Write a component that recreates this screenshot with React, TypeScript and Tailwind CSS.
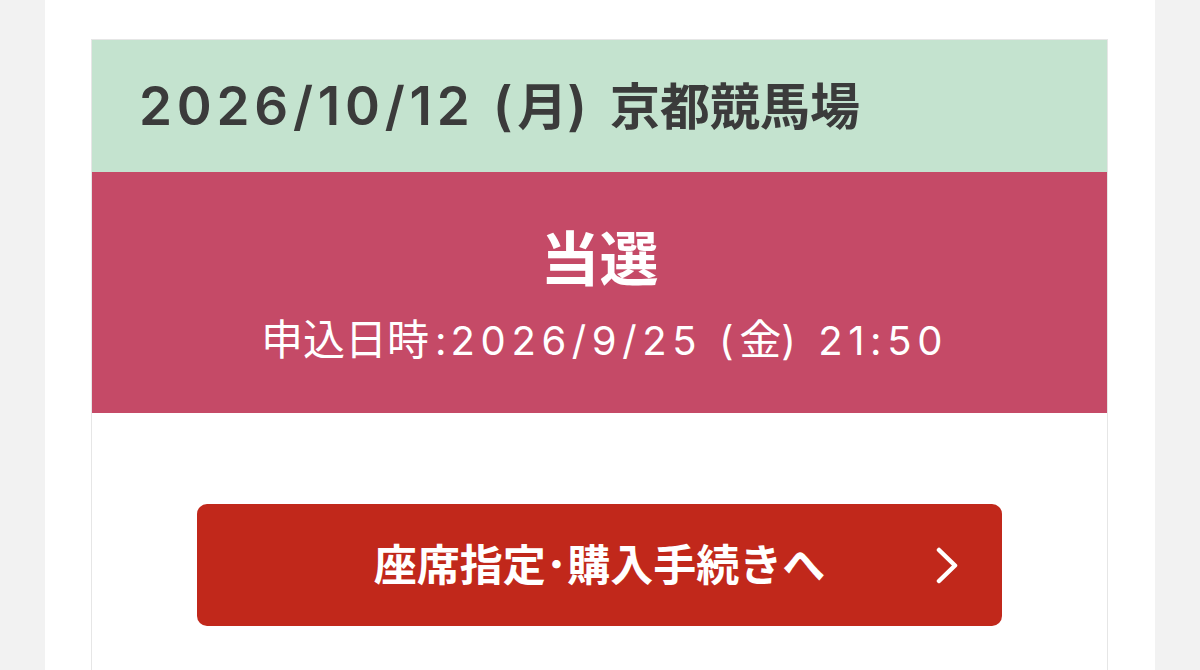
const jp = { fontFamily: 'Inter, "Noto Sans CJK JP", sans-serif' };

function Chevron() {
  return (
    <svg
      className="absolute right-[44px] h-[37px] w-[22px]"
      viewBox="0 0 22 37"
      fill="none"
      stroke="currentColor"
      strokeWidth={4.5}
      strokeLinecap="round"
      strokeLinejoin="round"
    >
      <polyline points="3,3 19,18.5 3,34" />
    </svg>
  );
}

function ResultCard() {
  return (
    <div className="ml-[46px] mt-[39px] w-[1017px] border border-[#e6e6e6] bg-white" style={jp}>
      {/* race date + venue */}
      <div className="flex h-[132px] items-center bg-[#c4e3cf] pl-[47px]">
        <h2 className="text-[50px] font-semibold leading-none text-[#3b3b3b]">
          <span className="text-[53px] tracking-[0.09em]">2026/10/12 (</span>月
          <span className="text-[53px] tracking-[0.09em]">) </span>
          京都競馬場
        </h2>
      </div>

      {/* lottery result */}
      <div className="flex h-[241px] flex-col items-center bg-[#c54a67] pt-[58px] text-white">
        <p className="text-[59px] font-bold leading-none">当選</p>
        <p className="mt-[30px] pl-[10px] text-[42px] font-normal leading-none">
          申込日時<span className="ml-[6px] mr-[4px] text-[40px]">:</span>
          <span className="text-[40px] tracking-[0.14em]">2026/9/25 (</span>金
          <span className="text-[40px] tracking-[0.14em]">) 21:50</span>
        </p>
      </div>

      <div className="px-[105px] pt-[91px] pb-[60px]">
        <button className="relative flex h-[122px] w-full items-center justify-center rounded-[10px] bg-[#c1281b] text-white">
          <span className="text-[43px] font-bold leading-none">座席指定･購入手続きへ</span>
          <Chevron />
        </button>
      </div>
    </div>
  );
}

export default function App() {
  return (
    <div className="flex min-h-[670px] justify-center bg-[#f2f2f2]">
      <div className="min-h-[670px] w-[1110px] bg-white">
        <ResultCard />
      </div>
    </div>
  );
}
